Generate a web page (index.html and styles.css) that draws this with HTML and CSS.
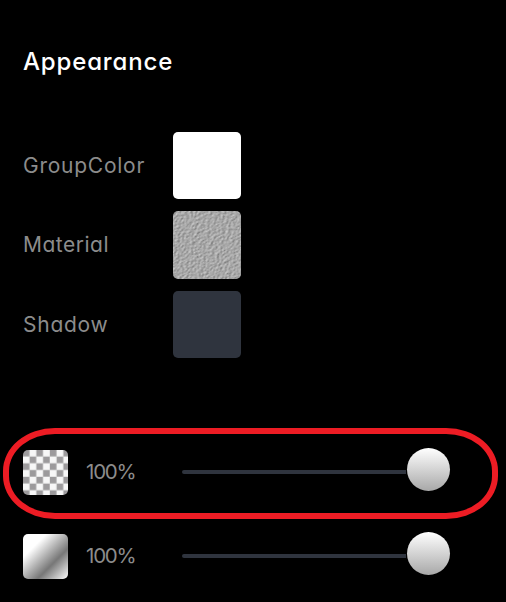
FILE: index.html
```html
<!DOCTYPE html>
<html lang="en">
<head>
<meta charset="utf-8">
<title>Appearance</title>
<link rel="stylesheet" href="styles.css">
</head>
<body>
<main class="panel">
  <h1 class="title">Appearance</h1>
  <section class="swatches">
    <div class="row"><span class="label label-group">GroupColor</span><span class="swatch white"></span></div>
    <div class="row row-tall"><span class="label label-material">Material</span>
      <svg class="swatch texture" viewBox="0 0 68 68" aria-hidden="true">
        <defs>
          <filter id="grain" x="0" y="0" width="100%" height="100%" color-interpolation-filters="sRGB">
            <feTurbulence type="fractalNoise" baseFrequency="0.38 0.75" numOctaves="3" seed="8" result="n"/>
            <feDiffuseLighting in="n" lighting-color="#ffffff" surfaceScale="0.7" diffuseConstant="0.95">
              <feDistantLight azimuth="235" elevation="44"/>
            </feDiffuseLighting>
          </filter>
        </defs>
        <g transform="rotate(-25 34 34)"><rect x="-20" y="-20" width="108" height="108" filter="url(#grain)"/></g>
      </svg>
    </div>
    <div class="row"><span class="label label-shadow">Shadow</span><span class="swatch slate"></span></div>
  </section>
  <section class="sliders">
    <div class="slider highlighted">
      <svg class="thumb" viewBox="0 0 45 45" aria-hidden="true">
        <defs>
          <pattern id="checker" width="13.5" height="13.5" patternUnits="userSpaceOnUse">
            <rect width="13.5" height="13.5" fill="#d2d2d2"/>
            <path d="M0 0h6.3v6.3H0zM6.8 6.8h6.3v6.3H6.8z" fill="#9c9a9c"/>
            <path d="M6.8 0h6.3v6.3H6.8zM0 6.8h6.3v6.3H0z" fill="#f7f7f7"/>
          </pattern>
        </defs>
        <rect width="45" height="45" fill="url(#checker)"/>
      </svg>
      <span class="value">100%</span>
      <span class="control"><span class="track"></span><span class="knob"></span></span>
    </div>
    <div class="slider">
      <span class="thumb metal"></span>
      <span class="value">100%</span>
      <span class="control"><span class="track"></span><span class="knob"></span></span>
    </div>
  </section>
</main>
</body>
</html>
```
FILE: styles.css
```css
*, *::before { box-sizing: border-box; }
body {
  margin: 0;
  background: #000;
  font-family: Inter, "Liberation Sans", sans-serif;
  font-feature-settings: "cv11";
}
.panel { width: 506px; height: 602px; padding: 44px 0 0 23px; overflow: hidden; }
.title {
  margin: 0;
  height: 36px;
  line-height: 36px;
  font-size: 24px;
  font-weight: 500;
  color: #fff;
  letter-spacing: 0.85px;
}
.swatches { display: flex; flex-direction: column; gap: 12px; margin-top: 52px; }
.row { display: flex; align-items: center; height: 67px; }
.row-tall { height: 68px; }
.label { width: 150px; flex: none; font-size: 21px; line-height: 30px; color: #8c8c8c; }
.label-group { letter-spacing: 0.75px; }
.label-material { letter-spacing: 0.5px; }
.label-shadow { letter-spacing: 0.75px; }
.swatch { display: block; width: 68px; height: 67px; border-radius: 5px; overflow: hidden; }
.texture { height: 68px; }
.white { background: #fff; }
.slate { background: #2f343e; }
.sliders { display: flex; flex-direction: column; gap: 39px; margin-top: 92px; }
.slider { position: relative; display: flex; align-items: center; height: 45px; }
.highlighted::before {
  content: "";
  position: absolute;
  left: -20px;
  top: -22px;
  width: 495px;
  height: 91px;
  border: 6px solid #ed1c24;
  border-radius: 52px / 43px;
}
.thumb { display: block; width: 45px; height: 45px; border-radius: 5px; flex: none; overflow: hidden; }
.metal { background: linear-gradient(135deg, #fff 0 26%, #777 66%, #f5f5f5 98%); }
.value { width: 78px; margin: -2px 0 0 18px; font-size: 20.5px; line-height: 30px; color: #8c8c8c; letter-spacing: -1.2px; }
.control { display: flex; align-items: center; margin: -2px 0 0 18px; }
.track { width: 224px; height: 4px; border-radius: 2px 0 0 2px; background: #2f343e; }
.knob {
  width: 43px;
  height: 43px;
  margin: -4px 0 0 1px;
  border-radius: 50%;
  background: linear-gradient(#fff, #a8a8a8);
}
```
